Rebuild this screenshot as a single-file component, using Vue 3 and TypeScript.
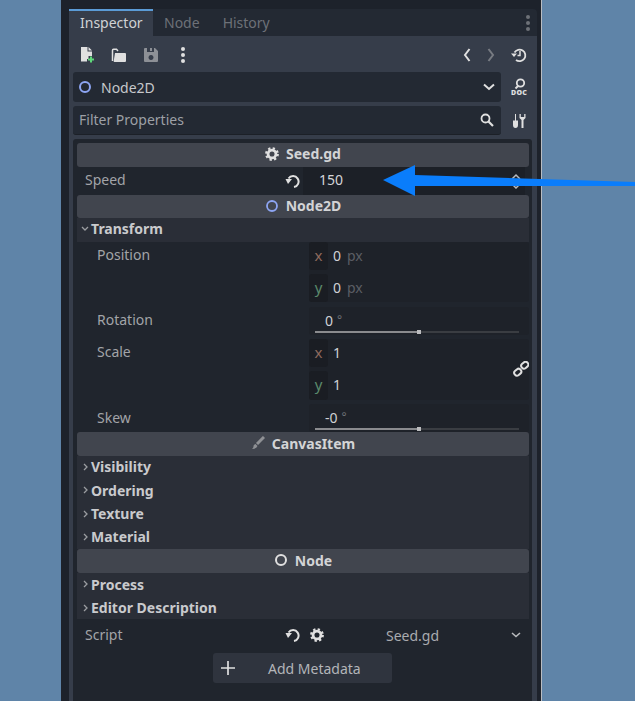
<script setup lang="ts">
const tabs: string[] = ['Node', 'History']
const canvasFolds: string[] = ['Visibility', 'Ordering', 'Texture', 'Material']
const nodeFolds: string[] = ['Process', 'Editor Description']
</script>

<template>
  <div class="page">
    <div class="editor">
      <div class="tabs">
        <div class="tab active">Inspector</div>
        <div v-for="t in tabs" :key="t" class="tab">{{ t }}</div>
        <div class="spacer"></div>
        <svg class="tabmenu" width="6" height="18" viewBox="0 0 6 18"><circle cx="3" cy="3" r="2"/><circle cx="3" cy="9" r="2"/><circle cx="3" cy="15" r="2"/></svg>
      </div>
      <div class="panel">
        <div class="toolbar">
          <svg class="ic" style="margin-left:6px" width="16" height="16" viewBox="0 0 16 16">
            <path fill="#e0e0e0" d="M2 0h6.500v4.500H13V9H9.500v3H8v2.500H2z"/><path fill="#e0e0e0" d="M9.500 0L13 3.500H9.500z"/>
            <path fill="#5fd87a" d="M11 9.500h2v2h2v2h-2v2h-2v-2H9v-2h2z"/>
          </svg>
          <svg class="ic" width="16" height="16" viewBox="0 0 16 16">
            <path fill="none" stroke="#e0e0e0" stroke-width="1.500" d="M1.500 14V3.500q0-1.200 1-1.200h3l1.500 1.700"/>
            <path fill="#e0e0e0" d="M3.500 15q-1 0-.8-1L4 6h10q1 0 1 1v7q0 1-1 1z"/>
          </svg>
          <svg class="ic" width="16" height="16" viewBox="0 0 16 16">
            <path fill="#8d9096" fill-rule="evenodd" d="M2 1h10l3 3v10q0 1-1 1H2q-1 0-1-1V2q0-1 1-1zm2 0v4h7V1H9v3H7V1zM8 8a2.500 2.500 0 1 0 .01 0z"/>
          </svg>
          <svg class="ic" width="16" height="18" viewBox="0 0 16 18"><g fill="#e0e0e0"><circle cx="8" cy="3" r="2"/><circle cx="8" cy="9" r="2"/><circle cx="8" cy="15" r="2"/></g></svg>
          <div class="spacer"></div>
          <svg class="nav" width="10" height="16" viewBox="0 0 10 16"><path fill="none" stroke="#e0e0e0" stroke-width="2" d="M7.500 2L3 8l4.500 6"/></svg>
          <svg class="nav dim" width="10" height="16" viewBox="0 0 10 16"><path fill="none" stroke="#777b82" stroke-width="2" d="M2.500 2L7 8l-4.500 6"/></svg>
          <svg class="hist" width="16" height="16" viewBox="0 0 16 16">
            <path fill="none" stroke="#e0e0e0" stroke-width="1.800" d="M3.500 5.500a5.800 5.800 0 1 1 1.500 7.500"/>
            <path fill="#e0e0e0" d="M0 6.500h6l-3 3.500z"/><path fill="none" stroke="#e0e0e0" stroke-width="1.500" d="M9 4V8.500H6.500"/>
          </svg>
        </div>

        <div class="inputrow">
          <div class="box">
            <svg class="nodeic" width="14" height="14" viewBox="0 0 14 14"><circle cx="6" cy="7" r="5" fill="none" stroke="#8da5f3" stroke-width="2"/></svg>
            <span class="boxtext">Node2D</span>
            <div class="spacer"></div>
            <svg class="chev" width="12" height="8" viewBox="0 0 12 8"><path fill="none" stroke="#e0e0e0" stroke-width="2" d="M1 1.500l5 4.500 5-4.500"/></svg>
          </div>
          <svg class="side" width="18" height="22" viewBox="0 0 18 22">
            <circle cx="10.500" cy="7" r="3.700" fill="none" stroke="#e0e0e0" stroke-width="1.800"/>
            <path stroke="#e0e0e0" stroke-width="2" d="M8 10l-2.500 2.500"/>
            <text x="9" y="18.500" class="doc">DOC</text>
          </svg>
        </div>

        <div class="inputrow second">
          <div class="box filter">
            <span class="filtertext">Filter Properties</span>
            <div class="spacer"></div>
            <svg width="16" height="16" viewBox="0 0 16 16" class="search"><circle cx="6.500" cy="6.500" r="4" fill="none" stroke="#e0e0e0" stroke-width="1.800"/><path stroke="#e0e0e0" stroke-width="2.200" d="M9.500 9.500l4.500 4.500"/></svg>
          </div>
          <svg class="side" width="16" height="16" viewBox="0 0 16 16">
            <path fill="#e0e0e0" d="M5 1h1v6.500h2v4.500a2.500 3 0 0 1-5 0V7.500h2z"/>
            <path fill="#e0e0e0" d="M9.500 1h1.300v3h3.400V1h1.300v4L13.500 7v8h-2V7L9.500 5z"/>
          </svg>
        </div>

        <div class="inspector">
          <div class="header first">
            <svg class="gear" width="14" height="14" viewBox="0 0 16 16"><use href="#gear-shape"/></svg>
            <span>Seed.gd</span>
          </div>
          <div class="speed">
            <span class="lbl">Speed</span>
            <svg class="revert" width="16" height="16" viewBox="0 0 16 16"><use href="#revert-shape"/></svg>
            <div class="speedfield">
              <span class="val">150</span>
              <div class="spacer"></div>
              <svg class="updown" width="12" height="16" viewBox="0 0 12 16"><path fill="none" stroke="#b8babd" stroke-width="1.500" d="M2 6l4-4 4 4M2 11l4 4 4-4"/></svg>
            </div>
          </div>

          <div class="header">
            <svg width="14" height="14" viewBox="0 0 14 14"><circle cx="7" cy="7" r="5" fill="none" stroke="#8da5f3" stroke-width="1.800"/></svg>
            <span>Node2D</span>
          </div>
          <div class="fold open">
            <svg width="8" height="6" viewBox="0 0 8 6"><path fill="none" stroke="#9b9da1" stroke-width="1.300" d="M1 1l3 3 3-3"/></svg>
            <span>Transform</span>
          </div>

          <div class="prop">
            <span class="plabel">Position</span>
            <div class="stack">
              <div class="vec"><span class="axis x">x</span><span class="num">0</span><span class="unit">px</span></div>
              <div class="vec"><span class="axis y">y</span><span class="num">0</span><span class="unit">px</span></div>
            </div>
          </div>
          <div class="prop">
            <span class="plabel">Rotation</span>
            <div class="slider">
              <div class="slidetext"><span class="num">0</span><span class="deg">°</span></div>
              <div class="track"><div class="fill"></div><div class="grab"></div></div>
            </div>
          </div>
          <div class="prop">
            <span class="plabel">Scale</span>
            <div class="stack linked">
              <div class="vec"><span class="axis x">x</span><span class="num">1</span></div>
              <div class="vec"><span class="axis y">y</span><span class="num">1</span></div>
              <svg class="link" width="16" height="16" viewBox="0 0 16 16"><g fill="none" stroke="#e0e0e0" stroke-width="2"><rect x="8" y="1.500" width="7.500" height="5.500" rx="2.700" transform="rotate(-40 11.700 4.200)"/><rect x="1" y="8.500" width="7.500" height="5.500" rx="2.700" transform="rotate(-40 4.700 11.200)"/></g></svg>
            </div>
          </div>
          <div class="prop">
            <span class="plabel skew">Skew</span>
            <div class="slider">
              <div class="slidetext"><span class="num">-0</span><span class="deg">°</span></div>
              <div class="track"><div class="fill"></div><div class="grab"></div></div>
            </div>
          </div>

          <div class="header canvas">
            <svg width="14" height="14" viewBox="0 0 14 14"><path stroke="#8f9195" stroke-width="3" d="M13 1L6 8"/><path fill="#8f9195" d="M4.500 8L6.500 10q-1 3-5.500 3q1.800-1.500 1.500-3.200q.4-1.400 2-1.800z"/></svg>
            <span>CanvasItem</span>
          </div>
          <div v-for="f in canvasFolds" :key="f" class="fold">
            <svg width="6" height="8" viewBox="0 0 6 8"><path fill="none" stroke="#9b9da1" stroke-width="1.300" d="M1 1l3 3-3 3"/></svg>
            <span>{{ f }}</span>
          </div>

          <div class="header">
            <svg width="14" height="14" viewBox="0 0 14 14"><circle cx="7" cy="7" r="5" fill="none" stroke="#e0e0e0" stroke-width="2"/></svg>
            <span>Node</span>
          </div>
          <div v-for="f in nodeFolds" :key="f" class="fold lower">
            <svg width="6" height="8" viewBox="0 0 6 8"><path fill="none" stroke="#9b9da1" stroke-width="1.300" d="M1 1l3 3-3 3"/></svg>
            <span>{{ f }}</span>
          </div>

          <div class="script">
            <span class="lbl">Script</span>
            <svg class="revert" width="16" height="16" viewBox="0 0 16 16"><use href="#revert-shape"/></svg>
            <svg class="scriptgear" width="14" height="14" viewBox="0 0 16 16"><use href="#gear-shape"/></svg>
            <span class="scriptname">Seed.gd</span>
            <div class="spacer"></div>
            <svg class="scriptchev" width="10" height="6" viewBox="0 0 10 6"><path fill="none" stroke="#b8babd" stroke-width="1.600" d="M1 1l4 3.500L9 1"/></svg>
          </div>
          <div class="metarow">
            <div class="addmeta">
              <svg width="16" height="16" viewBox="0 0 16 16"><path stroke="#e0e0e0" stroke-width="1.700" d="M1 8h14M8 1v14"/></svg>
              <span>Add Metadata</span>
            </div>
          </div>
        </div>
      </div>
    </div>

    <svg class="arrow" width="252" height="31" viewBox="383 165 252 31">
      <path fill="#0a7dfb" d="M383 180L415 165V175L635 182V186L415 186V196z"/>
    </svg>

    <svg class="defs" width="0" height="0">
      <defs>
        <g id="gear-shape">
          <circle cx="8" cy="8" r="4.500" fill="none" stroke="#e0e0e0" stroke-width="3.200"/>
          <circle cx="8" cy="8" r="6.600" fill="none" stroke="#e0e0e0" stroke-width="2.600" stroke-dasharray="2.600 2.580"/>
        </g>
        <g id="revert-shape">
          <path fill="none" stroke="#e0e0e0" stroke-width="2" d="M4.500 5.500A5.500 5.500 0 1 1 10 14"/>
          <path fill="#e0e0e0" d="M1.500 6h6.500L4 11z"/>
        </g>
      </defs>
    </svg>
  </div>
</template>

<style>
html, body { margin: 0; padding: 0; }
</style>

<style scoped>
.page {
  position: relative;
  width: 635px;
  height: 701px;
  overflow: hidden;
  background: #5f84a8;
  font-family: "Noto Sans", sans-serif;
  font-size: 14px;
  line-height: 19px;
  box-sizing: border-box;
  padding-left: 60px;
}
.spacer { flex: 1; }
.editor {
  width: 482px;
  height: 701px;
  box-sizing: border-box;
  background: #1d222b;
  border-left: 1px solid #5f84a8;
  border-right: 1px solid #b8bcc2;
  padding: 9px 4px 0 8px;
  display: flex;
  flex-direction: column;
}
.tabs {
  height: 27px;
  display: flex;
  align-items: center;
  background: #232933;
  border-radius: 4px 4px 0 0;
  flex: none;
  padding-right: 6px;
}
.tab {
  height: 27px;
  box-sizing: border-box;
  padding: 2px 12px 0 11px;
  line-height: 23px;
  color: #6d7178;
}
.tab.active {
  width: 84px;
  color: #d0d2d5;
  background: #363d4a;
  border-top: 2px solid #5b9bd6;
  padding: 0 11px;
}
.tabmenu { fill: #6d7178; }
.panel {
  flex: 1;
  background: #363d4a;
  padding: 0 4px;
  min-height: 0;
  display: flex;
  flex-direction: column;
}
.toolbar {
  height: 36px;
  flex: none;
  display: flex;
  align-items: center;
  padding-top: 2px;
  box-sizing: border-box;
}
.ic { margin-right: 16px; }
.nav { margin-left: 0; }
.nav.dim { margin-left: 14px; }
.hist { margin-left: 15px; margin-right: 6px; }
.inputrow {
  display: flex;
  align-items: center;
  height: 30px;
  flex: none;
}
.inputrow.second { margin-top: 4px; height: 29px; }
.box {
  width: 428px;
  height: 100%;
  box-sizing: border-box;
  background: #232933;
  border-radius: 3px;
  display: flex;
  align-items: center;
  padding: 0 6px;
}
.nodeic { margin-right: 8px; }
.boxtext { color: #c6c8cb; }
.chev { margin-right: 0; }
.filter { border-bottom: 1px solid #1c2027; padding-right: 6px; padding-bottom: 1px; }
.filtertext { color: #9da0a6; }
.search { margin-right: 0; }
.side { margin-left: 9px; }
.doc {
  font-family: "Noto Sans", sans-serif;
  font-size: 7px;
  font-weight: 900;
  fill: #e0e0e0;
  text-anchor: middle;
  letter-spacing: 0.2px;
}
.inspector {
  margin-top: 4px;
  flex: 1;
  width: 459px;
  background: #20252d;
  box-sizing: border-box;
  padding: 4px 3px 0 4px;
  border-radius: 3px 3px 0 0;
  display: flex;
  flex-direction: column;
}
.header {
  height: 23.600px;
  box-sizing: border-box;
  padding-bottom: 1.500px;
  flex: none;
  background: #41454e;
  border-radius: 3px;
  display: flex;
  align-items: center;
  justify-content: center;
  gap: 7px;
  font-weight: 700;
  color: #d3d4d6;
}
.header.first { padding-bottom: 2.500px; }
.header.canvas { padding-bottom: 0.500px; }
.speed {
  height: 28px;
  flex: none;
  display: flex;
  align-items: center;
  padding-left: 8px;
}
.lbl { width: 199px; color: #a2a4a8; flex: none; margin-top: -2px; }
.revert { flex: none; margin-right: 3px; }
.speedfield {
  flex: 1;
  height: 28px;
  box-sizing: border-box;
  background: #1c2027;
  display: flex;
  align-items: center;
  padding: 0 3px 0 16px;
  margin-right: 4px;
  margin-left: 0;
}
.val { color: #d4d5d8; margin-top: -2px; }
.updown { margin-right: 0; }
.fold {
  height: 23.400px;
  box-sizing: border-box;
  padding-bottom: 1px;
  flex: none;
  background: #2a2e37;
  display: flex;
  align-items: center;
  font-weight: 700;
  color: #c9cacd;
  padding-left: 6px;
  gap: 2px;
}
.fold.open { padding-left: 4px; gap: 2px; padding-bottom: 2px; }
.fold.lower { padding-bottom: 0.400px; }
.prop {
  display: grid;
  grid-template-columns: 232px 220px;
  flex: none;
  margin-top: 4.100px;
}
.fold.open + .prop { margin-top: 0.300px; }
.plabel { color: #a2a4a8; padding: 3px 0 0 20px; }
.plabel.skew { padding-top: 4px; }
.stack {
  display: flex;
  flex-direction: column;
  gap: 4px;
  background: #1e2229;
  border-radius: 3px;
}
.linked { position: relative; }
.link { position: absolute; right: 0; top: 22px; }
.vec {
  height: 28.300px;
  display: flex;
  align-items: center;
}
.axis {
  width: 19px;
  height: 100%;
  flex: none;
  background: #1a1d23;
  border-radius: 3px;
  text-align: center;
  line-height: 27px;
  font-size: 15px;
}
.axis.x { color: #8f6a5e; }
.axis.y { color: #5a8a6c; }
.num { color: #d0d2d5; margin-left: 5px; }
.vec .num { margin-left: 5px; margin-top: -2px; }
.unit { color: #5b5e64; margin-left: 6px; margin-top: -2px; }
.slider {
  height: 28.300px;
  box-sizing: border-box;
  background: #1e2229;
  border-radius: 3px;
  padding: 0 10px 0 6px;
}
.slidetext { height: 24px; line-height: 26px; padding-left: 10px; }
.slidetext .num { margin-left: 0; }
.deg { color: #6d7076; margin-left: 4px; font-size: 12px; vertical-align: 2px; }
.track {
  position: relative;
  height: 2px;
  background: #3a3d42;
}
.fill { width: 104px; height: 2px; background: #8a8b8e; }
.grab {
  position: absolute;
  left: 102px;
  top: -1px;
  width: 4px;
  height: 4px;
  background: #bcbdbf;
}
.script {
  height: 34px;
  box-sizing: border-box;
  padding-bottom: 2px;
  flex: none;
  display: flex;
  align-items: center;
  padding-left: 8px;
}
.script .lbl { margin-top: -2px; }
.scriptgear { margin-left: 7px; }
.scriptname { margin-left: 62px; color: #a9abaf; }
.scriptchev { margin-right: 8px; }
.metarow {
  display: flex;
  flex: none;
  padding-left: 136px;
}
.addmeta {
  width: 179px;
  height: 29.300px;
  box-sizing: border-box;
  background: #2f343e;
  border-radius: 3px;
  display: flex;
  align-items: center;
  padding-left: 7px;
  gap: 32px;
  color: #b3b5b9;
}
.arrow { position: absolute; left: 383px; top: 165px; }
.defs { position: absolute; }
</style>
